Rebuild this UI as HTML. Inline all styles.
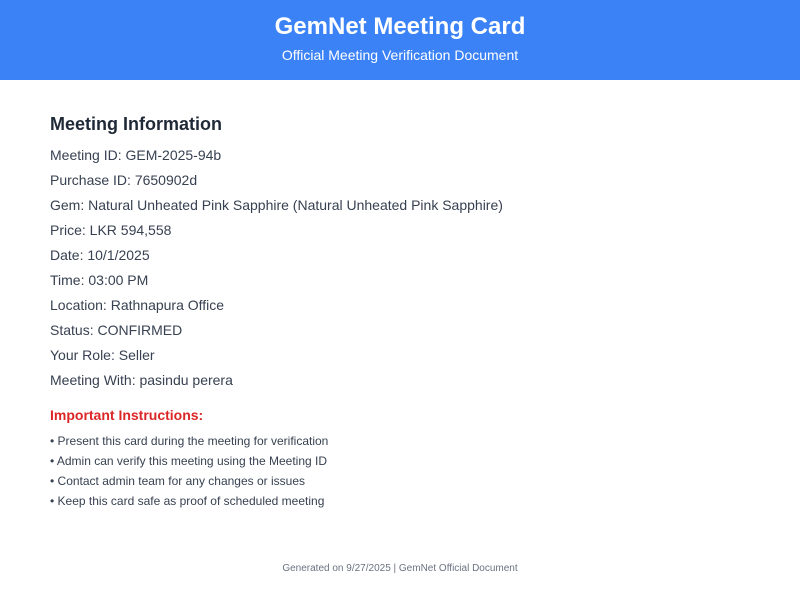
<!DOCTYPE html>
<html><head><style>
body{margin:0;width:800px;height:600px;background:#fff;font-family:"Liberation Sans",sans-serif;position:relative;overflow:hidden}
.hdr{position:absolute;left:0;top:0;width:800px;height:80px;background:#3b82f6;color:#fff;text-align:center}
.hdr h1{margin:0;position:absolute;top:13px;width:100%;font-size:24px;font-weight:bold}
.hdr p{margin:0;position:absolute;top:47px;width:100%;font-size:14px}
h2{position:absolute;top:114px;left:50px;margin:0;font-size:18px;color:#1f2937;white-space:nowrap}
.l{position:absolute;left:50px;font-size:14px;color:#374151;white-space:nowrap}
.ii{position:absolute;left:50px;top:407px;font-size:14px;font-weight:bold;color:#dc2626}
.b{position:absolute;left:50px;font-size:12px;color:#374151;white-space:nowrap}
.f{position:absolute;top:563px;width:800px;text-align:center;font-size:10px;color:#6b7280}
</style></head><body>
<div class="hdr"><h1>GemNet Meeting Card</h1><p>Official Meeting Verification Document</p></div>
<h2>Meeting Information</h2>
<div class="l" style="top:147px">Meeting ID: GEM-2025-94b</div>
<div class="l" style="top:172px">Purchase ID: 7650902d</div>
<div class="l" style="top:197px">Gem: Natural Unheated Pink Sapphire (Natural Unheated Pink Sapphire)</div>
<div class="l" style="top:222px">Price: LKR 594,558</div>
<div class="l" style="top:247px">Date: 10/1/2025</div>
<div class="l" style="top:272px">Time: 03:00 PM</div>
<div class="l" style="top:297px">Location: Rathnapura Office</div>
<div class="l" style="top:322px">Status: CONFIRMED</div>
<div class="l" style="top:347px">Your Role: Seller</div>
<div class="l" style="top:372px">Meeting With: pasindu perera</div>
<div class="ii">Important Instructions:</div>
<div class="b" style="top:434px">• Present this card during the meeting for verification</div>
<div class="b" style="top:454px">• Admin can verify this meeting using the Meeting ID</div>
<div class="b" style="top:474px">• Contact admin team for any changes or issues</div>
<div class="b" style="top:494px">• Keep this card safe as proof of scheduled meeting</div>
<div class="f">Generated on 9/27/2025 | GemNet Official Document</div>
</body></html>
